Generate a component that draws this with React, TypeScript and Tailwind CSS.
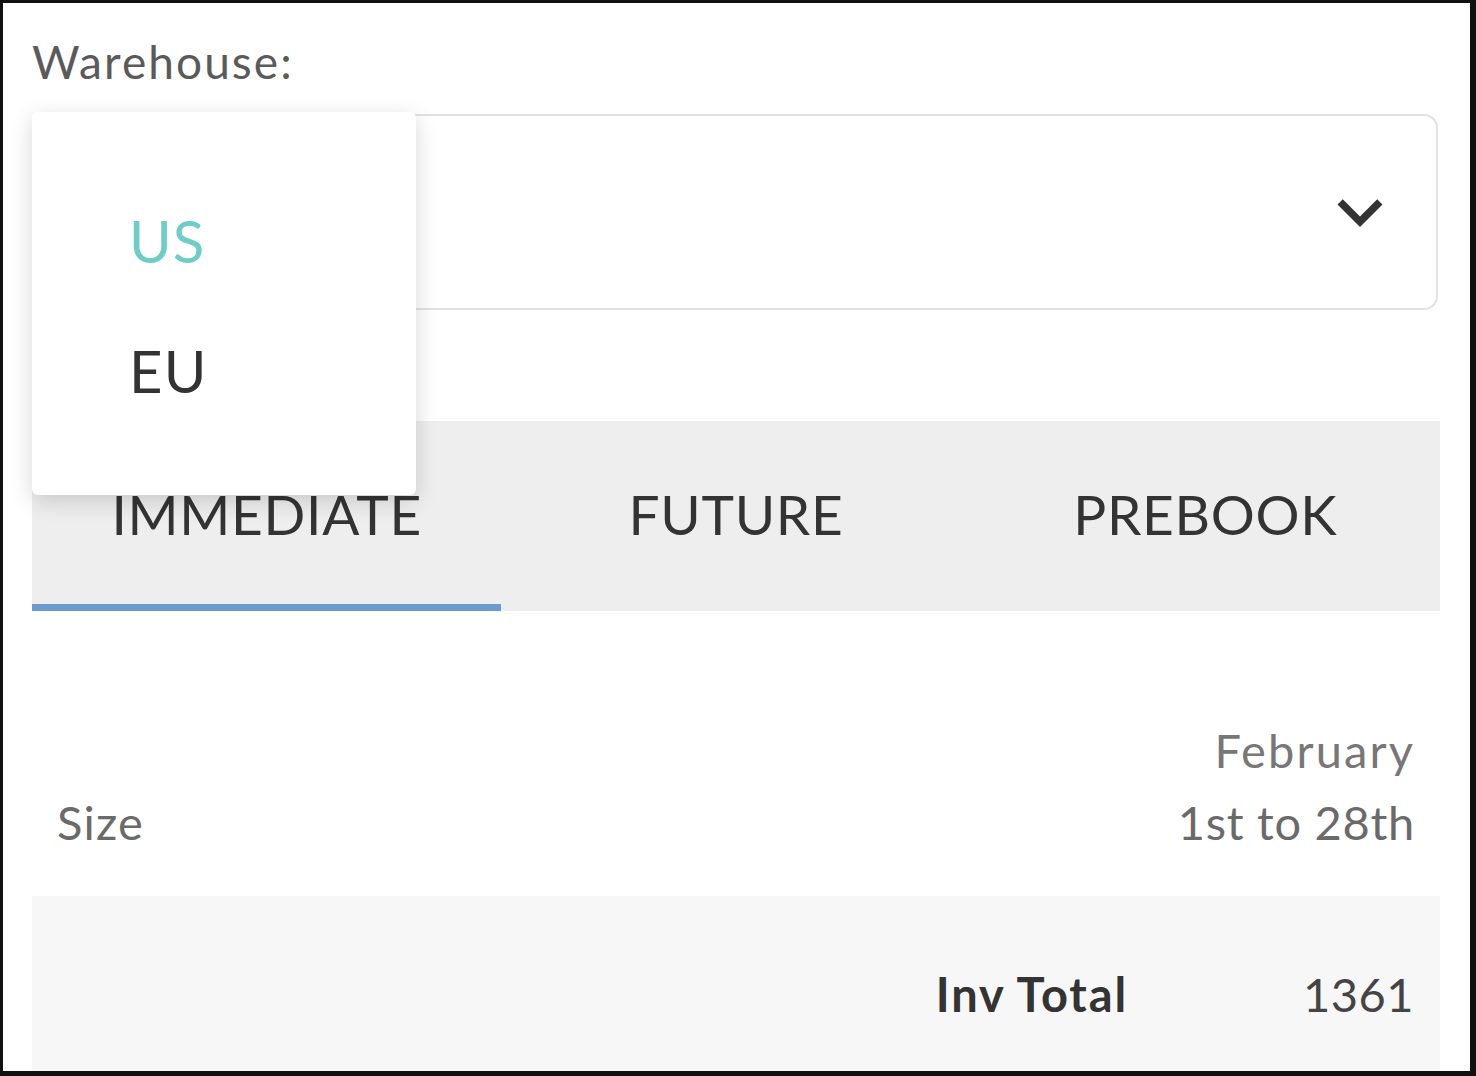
import React from 'react';

const tabs = ['IMMEDIATE', 'FUTURE', 'PREBOOK'];

const ExpandIcon = () => (
  <svg viewBox="0 0 24 24" className="w-[90px] h-[90px]" fill="#333333">
    <path d="M16.59 8.59L12 13.17 7.41 8.59 6 10l6 6 6-6z" />
  </svg>
);

const App = () => {
  return (
    <div className="w-[1476px] h-[1076px] overflow-hidden bg-white border-[#111111] border-l-[3px] border-t-[3px] border-r-[6px] border-b-[5px] font-[Lato,sans-serif]">
      <div className="pl-[29px] pr-[30px] pt-[31px]">
        <div className="text-[46px] leading-[56px] tracking-[0.045em] text-[#5a5a5a]">Warehouse:</div>

        <div className="relative mt-[24px] mr-[2px]">
          <div className="h-[196px] flex items-center justify-end pr-[31px] border-2 border-[#e2e2e2] rounded-[14px] bg-white">
            <ExpandIcon />
          </div>
          {/* open select menu */}
          <div className="absolute left-0 top-[-2px] w-[384px] bg-white rounded-[6px] shadow-[0_6px_22px_rgba(0,0,0,0.16)] pt-[64px] pb-[59px] z-10">
            <div className="pl-[97px] text-[58px] leading-[130px] tracking-[0.02em] text-[#6ecdc8]">US</div>
            <div className="pl-[97px] text-[58px] leading-[130px] tracking-[0.02em] text-[#333333]">EU</div>
          </div>
        </div>

        <div className="mt-[111px] grid grid-cols-3 bg-[#eeeeee] h-[190px]">
          {tabs.map((t, i) => (
            <div
              key={t}
              className={
                i === 0
                  ? 'flex items-center justify-center border-b-[7px] border-[#6c9bd2] text-[55px] tracking-[0.013em] text-[#333333] pt-[4px]'
                  : 'flex items-center justify-center border-b-[7px] border-transparent text-[55px] tracking-[0.013em] text-[#333333] pt-[4px]'
              }
            >
              {t}
            </div>
          ))}
        </div>

        <div className="flex items-end justify-between px-[25px] pt-[103px] pb-[38px] text-[47px] leading-[72px] text-[#6a6a6a]">
          <div className="tracking-[0.025em]">Size</div>
          <div className="text-right">
            <div className="text-[#777777] tracking-[0.045em]">February</div>
            <div className="tracking-[0.015em]">1st to 28th</div>
          </div>
        </div>

        <div className="bg-[#f7f7f7] h-[200px] pt-[62px] px-[26px] flex justify-end text-[47px] leading-[72px]">
          <div className="font-bold tracking-[0.04em] text-[#333333]">Inv Total</div>
          <div className="w-[286px] text-right tracking-[0.01em] text-[#444444]">1361</div>
        </div>
      </div>
    </div>
  );
};

export default App;
